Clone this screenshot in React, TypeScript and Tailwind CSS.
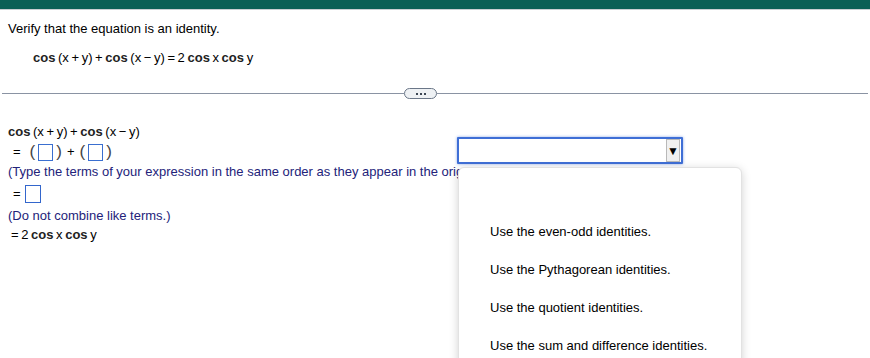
const options = [
  "Use the even-odd identities.",
  "Use the Pythagorean identities.",
  "Use the quotient identities.",
  "Use the sum and difference identities.",
];

function Box({ className = "" }: { className?: string }) {
  return (
    <span
      className={`inline-block border border-[#3a6fd0] bg-white align-middle ${className}`}
    />
  );
}

function Cos() {
  return <span className="font-bold text-[#222]">cos</span>;
}

export default function App() {
  return (
    <div className="relative h-[358px] w-[870px] overflow-hidden bg-white font-['Liberation_Sans',Arial,sans-serif] text-[13px] text-black">
      <div className="h-[9px] bg-[#0b5f56]" />
      <div className="h-px bg-[#c9cdd2]" />

      <div className="px-2 pt-[11px]">
        <p className="leading-[15px]">Verify that the equation is an identity.</p>
        <p className="mt-[14px] pl-[25px] leading-[15px] [word-spacing:-1px]">
          <Cos /> (x + y) + <Cos /> (x − y) = 2 <Cos /> x <Cos /> y
        </p>
      </div>

      <div className="mt-[23px] flex items-center px-[2px]">
        <div className="h-px w-[402px] bg-[#8a93a3]" />
        <div className="flex h-[11px] w-[33px] items-center justify-center gap-[2px] rounded-full border border-[#6b7788] bg-[#eef1f4]">
          <span className="h-[2px] w-[2px] bg-[#3c4653]" />
          <span className="h-[2px] w-[2px] bg-[#3c4653]" />
          <span className="h-[2px] w-[2px] bg-[#3c4653]" />
        </div>
        <div className="h-px flex-1 bg-[#8a93a3]" />
      </div>

      <div className="relative px-2 pt-[24px]">
        <p className="leading-[17px] [word-spacing:-1px]">
          <Cos /> (x + y) + <Cos /> (x − y)
        </p>
        <p className="mt-[3px] flex items-center gap-[3px] pl-[5px] leading-[18px]">
          <span className="mr-[6px]">=</span>
          <span className="text-[17px] text-[#444]">(</span>
          <Box className="h-[17px] w-[15px]" />
          <span className="text-[17px] text-[#444]">)</span>
          <span className="mx-[2px]">+</span>
          <span className="text-[17px] text-[#444]">(</span>
          <Box className="h-[17px] w-[15px]" />
          <span className="text-[17px] text-[#444]">)</span>
        </p>
        <p className="mt-[3px] whitespace-nowrap leading-[16px] text-[#23237a]">
          (Type the terms of your expression in the same order as they appear in the original expression.)
        </p>
        <p className="mt-[5px] flex items-center gap-[4px] pl-[5px] leading-[18px]">
          <span>=</span>
          <Box className="h-[18px] w-[16px] border-[#3366cc]" />
        </p>
        <p className="mt-[5px] leading-[16px] text-[#23237a]">(Do not combine like terms.)</p>
        <p className="mt-[3px] pl-[3px] leading-[16px] [word-spacing:-1px]">
          = 2 <Cos /> x <Cos /> y
        </p>

        <div className="absolute left-[457px] top-[38px]">
          <div className="flex h-[27px] w-[226px] items-center justify-end rounded-[1px] border-2 border-[#3f6fd6] bg-white pr-[1px] shadow-[0_0_3px_rgba(63,111,214,0.6)]">
            <div className="flex h-[23px] w-[14px] items-center justify-center border border-[#b9b9b9] bg-[#f0f0f0]">
              <span className="text-[12px] leading-none">▼</span>
            </div>
          </div>
          <ul className="mt-[3px] ml-px h-[200px] w-[284px] rounded-[6px] border border-[#e2e2e2] bg-white pt-[56px] pl-[31px] shadow-[0_2px_10px_rgba(0,0,0,0.18)]">
            {options.map((o) => (
              <li key={o} className="h-[38px] leading-[16px]">
                {o}
              </li>
            ))}
          </ul>
        </div>
      </div>
    </div>
  );
}
